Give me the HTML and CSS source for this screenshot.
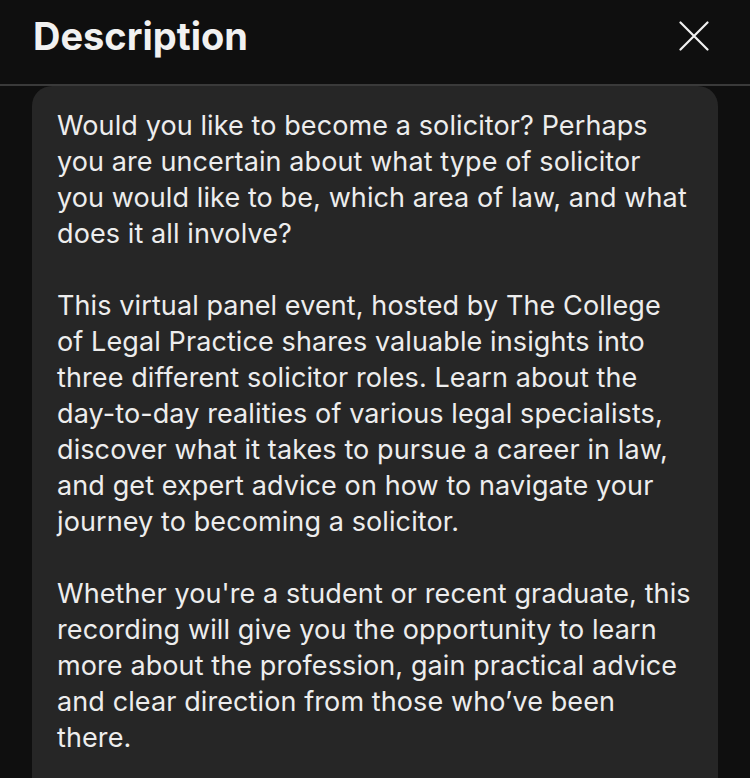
FILE: index.html
```html
<!DOCTYPE html>
<html>
<head>
<meta charset="utf-8">
<link rel="stylesheet" href="styles.css">
</head>
<body>
<header class="header">
  <h1 class="title">Description</h1>
  <button class="close" aria-label="Close">
    <svg width="30" height="30" viewBox="0 0 30 30"><path d="M1.5 1.5 L28.5 28.5 M28.5 1.5 L1.5 28.5" stroke="#f1f1f1" stroke-width="2.2" stroke-linecap="round" fill="none"/></svg>
  </button>
</header>
<div class="divider"></div>
<main class="card">
  <p>Would you like to become a solicitor? Perhaps you are uncertain about what type of solicitor you would like to be, which area of law, and what does it all involve?</p>
  <p>This virtual panel event, hosted by The College of Legal Practice shares valuable insights into three different solicitor roles. Learn about the day-to-day realities of various legal specialists, discover what it takes to pursue a career in law, and get expert advice on how to navigate your journey to becoming a solicitor.</p>
  <p>Whether you're a student or recent graduate, this recording will give you the opportunity to learn more about the profession, gain practical advice and clear direction from those who’ve been there.</p>
</main>
</body>
</html>
```
FILE: styles.css
```css
html, body {
  margin: 0;
  padding: 0;
  background: #0f0f0f;
  height: 100%;
  overflow: hidden;
}
body {
  font-family: Inter, "Liberation Sans", sans-serif;
  color: #f1f1f1;
}
.header {
  height: 84px;
  display: flex;
  align-items: center;
  justify-content: space-between;
  padding: 0 41px 0 33px;
  box-sizing: border-box;
}
.title {
  margin: 0;
  font-size: 38px;
  font-weight: 700;
  letter-spacing: 0;
  color: #f1f1f1;
  position: relative;
  top: -6px;
}
.close {
  background: none;
  border: 0;
  padding: 0;
  width: 30px;
  height: 30px;
  position: relative;
  top: -6px;
}
.divider {
  height: 2px;
  background: #3a3a3a;
}
.card {
  margin: 0 32px 0 32px;
  background: #262626;
  border-radius: 20px;
  padding: 22px 24px 40px 25px;
  min-height: 800px;
  font-size: 27px;
  letter-spacing: 0.1px;
  line-height: 36px;
  color: #ededed;
}
.card p {
  margin: 0 0 36px 0;
}
```
